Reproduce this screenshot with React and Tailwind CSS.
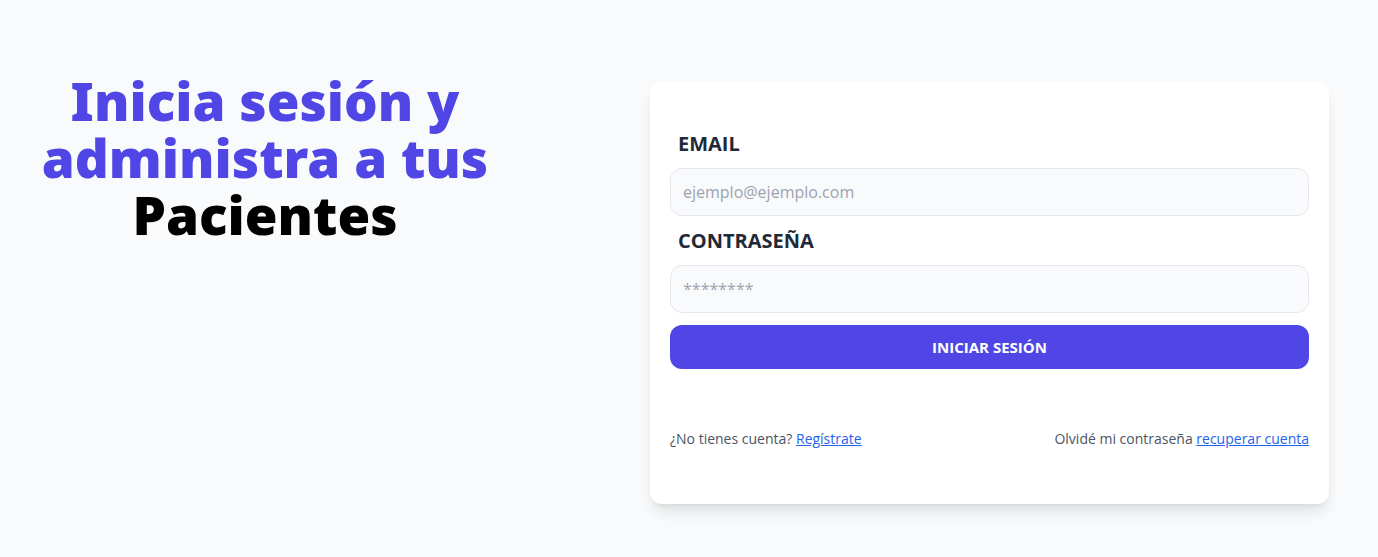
const LoginPage = () => {
  return (
    <div
      className="min-h-screen bg-gray-50"
      style={{ fontFamily: '"Open Sans", "Noto Sans", sans-serif' }}
    >
      <main className="grid grid-cols-[530px_679px] gap-[120px] pt-[82px]">
        <div className="text-center">
          <h1
            className="text-[53px] leading-[57px] font-black text-[#4f46e5] -mt-[10px]"
            style={{ fontFamily: '"Noto Sans", "Open Sans", sans-serif' }}
          >
            Inicia sesión y administra a tus{" "}
            <span className="text-black">Pacientes</span>
          </h1>
        </div>

        <div className="bg-white rounded-xl shadow-lg px-5 pt-[48px] pb-[55px]">
          <form>
            <label className="block px-2 text-xl font-bold uppercase text-[#1f2937]">
              Email
            </label>
            <input
              type="email"
              placeholder="ejemplo@ejemplo.com"
              className="mt-[10px] w-full h-12 px-3 rounded-xl border border-[#e5e7eb] bg-[#f9fafb] text-base placeholder:text-[#9ca3af] focus:outline-none"
            />
            <label className="block px-2 mt-[11px] text-xl font-bold uppercase text-[#1f2937]">
              Contraseña
            </label>
            <input
              type="password"
              placeholder="********"
              className="mt-[10px] w-full h-12 px-3 rounded-xl border border-[#e5e7eb] bg-[#f9fafb] text-base placeholder:text-[#9ca3af] focus:outline-none"
            />
            <button
              type="submit"
              className="mt-3 w-full h-11 rounded-xl bg-[#4f46e5] text-white text-[15px] font-bold uppercase"
            >
              Iniciar sesión
            </button>
          </form>

          <nav className="mt-[60px] flex justify-between text-sm text-[#4b5563]">
            <p>
              ¿No tienes cuenta?{" "}
              <a href="#" className="text-[#2563eb] underline">
                Regístrate
              </a>
            </p>
            <p>
              Olvidé mi contraseña{" "}
              <a href="#" className="text-[#2563eb] underline">
                recuperar cuenta
              </a>
            </p>
          </nav>
        </div>
      </main>
    </div>
  );
};

export default LoginPage;
